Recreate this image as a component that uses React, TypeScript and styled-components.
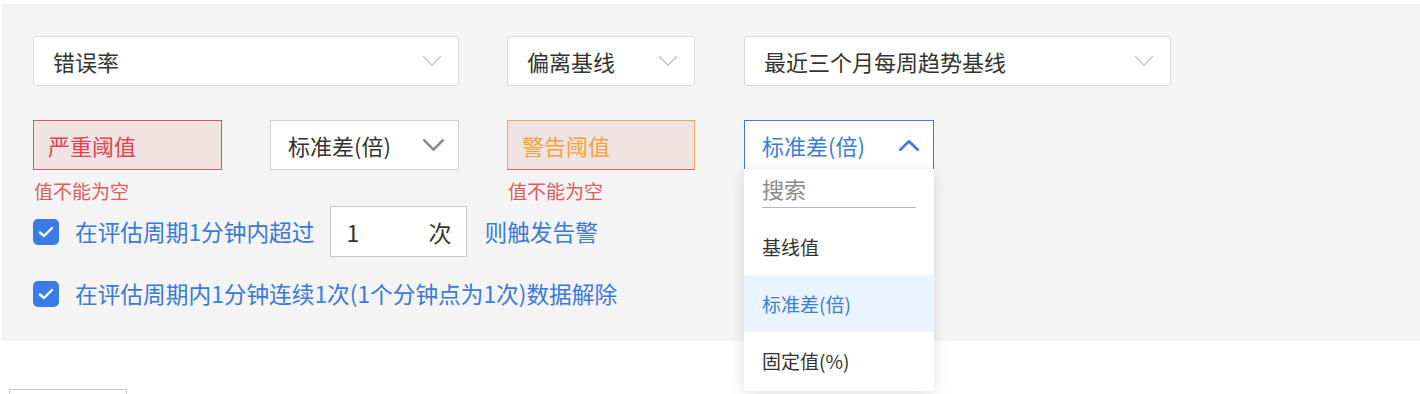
import React from "react";
import styled, { createGlobalStyle } from "styled-components";

const Global = createGlobalStyle`
  html, body { margin: 0; padding: 0; background: #ffffff; overflow: hidden; }
  body { font-family: "Noto Sans CJK SC", "Noto Sans", sans-serif; color: #333; }
  * { box-sizing: border-box; }
`;

const Page = styled.div`
  padding: 4px 0 0 1px;
`;

const Panel = styled.div`
  background: #f4f4f4;
  padding: 32px 32px 32px 32px;
  display: flex;
  flex-direction: column;
`;

const Row = styled.div<{ $mt?: number }>`
  display: flex;
  align-items: flex-start;
  margin-top: ${(p) => p.$mt ?? 0}px;
`;

const Gap = styled.div<{ $w: number }>`
  width: ${(p) => p.$w}px;
  flex: none;
`;

const SelectBox = styled.div<{ $w: number; $variant?: "soft" | "plain" | "open" }>`
  width: ${(p) => p.$w}px;
  height: 50px;
  flex: none;
  background: #fff;
  border: 1px solid
    ${(p) => (p.$variant === "open" ? "#3a7be0" : p.$variant === "plain" ? "#cfcfcf" : "#d9d9d9")};
  border-radius: ${(p) => (p.$variant === "soft" ? "3px" : "0")};
  display: flex;
  align-items: center;
  justify-content: space-between;
  padding: 0 ${(p) => (p.$variant === "soft" ? 17 : 14)}px 0 ${(p) => (p.$variant === "soft" ? 19 : 17)}px;
  font-size: 22px;
  color: ${(p) => (p.$variant === "open" ? "#3a7be0" : "#333")};
  position: relative;
  white-space: nowrap;
`;

const Field = styled.div`
  display: flex;
  flex-direction: column;
  flex: none;
`;

const ThresholdInput = styled.input<{ $w: number; $tone: "critical" | "warning" }>`
  width: ${(p) => p.$w}px;
  height: 50px;
  background: #f2e3e3;
  border: 1px solid;
  border-color: ${(p) =>
    p.$tone === "critical" ? "#e0525e" : "#f3a653 #f3a653 #e05a5a #f3a653"};
  border-radius: 0;
  padding: 0 14px;
  font-family: inherit;
  font-size: 22px;
  outline: none;
  &::placeholder {
    color: ${(p) => (p.$tone === "critical" ? "#e2424f" : "#f6a23c")};
    opacity: 1;
  }
`;

const ErrorText = styled.div`
  margin-top: 6px;
  line-height: 30px;
  height: 30px;
  font-size: 19px;
  color: #e25a5a;
  padding-left: 1px;
`;

const CheckRow = styled.label<{ $mt?: number }>`
  display: flex;
  align-items: center;
  margin-top: ${(p) => p.$mt ?? 0}px;
  font-size: 22.7px;
  line-height: 30px;
  color: #3a78e0;
  white-space: nowrap;
`;

const CheckBox = styled.span`
  width: 26px;
  height: 26px;
  border-radius: 5px;
  background: #3b7be8;
  display: inline-flex;
  align-items: center;
  justify-content: center;
  margin-right: 16px;
  flex: none;
`;

const Num = styled.span`
  color: #2f86e8;
`;

const CountBox = styled.div`
  width: 137px;
  height: 51px;
  margin: 0 17px 0 16px;
  background: #fff;
  border: 1px solid #c8c8c8;
  display: flex;
  align-items: center;
  justify-content: space-between;
  padding: 0 15px 0 15px;
  font-size: 23px;
  color: #333;
`;

const CountInput = styled.input`
  width: 60px;
  border: none;
  outline: none;
  font-family: inherit;
  font-size: 23px;
  color: #333;
  padding: 0;
  background: transparent;
`;

const Dropdown = styled.div`
  position: absolute;
  top: 100%;
  left: -1px;
  width: 190px;
  height: 222px;
  background: #fff;
  box-shadow: 0 3px 14px rgba(0, 0, 0, 0.13);
  z-index: 10;
  display: flex;
  flex-direction: column;
`;

const SearchWrap = styled.div`
  padding: 0 18px;
`;

const SearchInput = styled.input`
  width: 100%;
  height: 39px;
  border: none;
  border-bottom: 1px solid #b8b8b8;
  outline: none;
  padding: 0;
  font-family: inherit;
  font-size: 22px;
  background: transparent;
  &::placeholder {
    color: #8a8a8a;
    opacity: 1;
  }
`;

const OptionList = styled.div`
  margin-top: 10px;
  display: flex;
  flex-direction: column;
`;

const Option = styled.div<{ $active?: boolean }>`
  height: 57px;
  display: flex;
  align-items: center;
  padding-left: 18px;
  font-size: 19px;
  color: ${(p) => (p.$active ? "#3a7be0" : "#333")};
  background: ${(p) => (p.$active ? "#eaf4fe" : "transparent")};
`;

const BottomButton = styled.div`
  margin: 48px 0 0 8px;
  width: 118px;
  height: 40px;
  border: 1px solid #c8c8c8;
  background: #fff;
`;

const Chevron = ({ dir = "down", color = "#c4c4c4", w = 18, h = 10, sw = 1.4 }: {
  dir?: "down" | "up";
  color?: string;
  w?: number;
  h?: number;
  sw?: number;
}) => (
  <svg width={w} height={h} viewBox={`0 0 ${w} ${h}`} fill="none">
    <polyline
      points={
        dir === "down"
          ? `${sw / 2},${sw / 2} ${w / 2},${h - sw / 2} ${w - sw / 2},${sw / 2}`
          : `${sw / 2},${h - sw / 2} ${w / 2},${sw / 2} ${w - sw / 2},${h - sw / 2}`
      }
      stroke={color}
      strokeWidth={sw}
      strokeLinecap="round"
      strokeLinejoin="round"
    />
  </svg>
);

const Check = () => (
  <svg width="16" height="12" viewBox="0 0 16 12" fill="none">
    <polyline points="2,6.5 6,10 14,2" stroke="#fff" strokeWidth="2.4" strokeLinecap="round" strokeLinejoin="round" />
  </svg>
);

export default function App() {
  return (
    <>
      <Global />
      <Page>
        <Panel>
          <Row>
            <SelectBox $w={426} $variant="soft">
              <span>错误率</span>
              <Chevron />
            </SelectBox>
            <Gap $w={48} />
            <SelectBox $w={188} $variant="soft">
              <span>偏离基线</span>
              <Chevron />
            </SelectBox>
            <Gap $w={49} />
            <SelectBox $w={427} $variant="soft">
              <span>最近三个月每周趋势基线</span>
              <Chevron />
            </SelectBox>
          </Row>
          <Row $mt={34}>
            <Field>
              <ThresholdInput $w={189} $tone="critical" placeholder="严重阈值" />
              <ErrorText>值不能为空</ErrorText>
            </Field>
            <Gap $w={48} />
            <SelectBox $w={189} $variant="plain">
              <span>标准差(倍)</span>
              <Chevron color="#8a8a8a" w={21} h={12} sw={2.6} />
            </SelectBox>
            <Gap $w={48} />
            <Field>
              <ThresholdInput $w={188} $tone="warning" placeholder="警告阈值" />
              <ErrorText>值不能为空</ErrorText>
            </Field>
            <Gap $w={49} />
            <SelectBox $w={190} $variant="open">
              <span>标准差(倍)</span>
              <Chevron dir="up" color="#3a7be0" w={20} h={11} sw={2.6} />
              <Dropdown>
                <SearchWrap>
                  <SearchInput placeholder="搜索" />
                </SearchWrap>
                <OptionList>
                  <Option>基线值</Option>
                  <Option $active>标准差(倍)</Option>
                  <Option>固定值(%)</Option>
                </OptionList>
              </Dropdown>
            </SelectBox>
          </Row>
          <CheckRow>
            <CheckBox>
              <Check />
            </CheckBox>
            <span>
              在评估周期<Num>1</Num>分钟内超过
            </span>
            <CountBox>
              <CountInput defaultValue="1" />
              <span>次</span>
            </CountBox>
            <span>则触发告警</span>
          </CheckRow>
          <CheckRow $mt={22}>
            <CheckBox>
              <Check />
            </CheckBox>
            <span>
              在评估周期内<Num>1</Num>分钟连续<Num>1</Num>次(1个分钟点为1次)数据解除
            </span>
          </CheckRow>
        </Panel>
        <BottomButton />
      </Page>
    </>
  );
}
